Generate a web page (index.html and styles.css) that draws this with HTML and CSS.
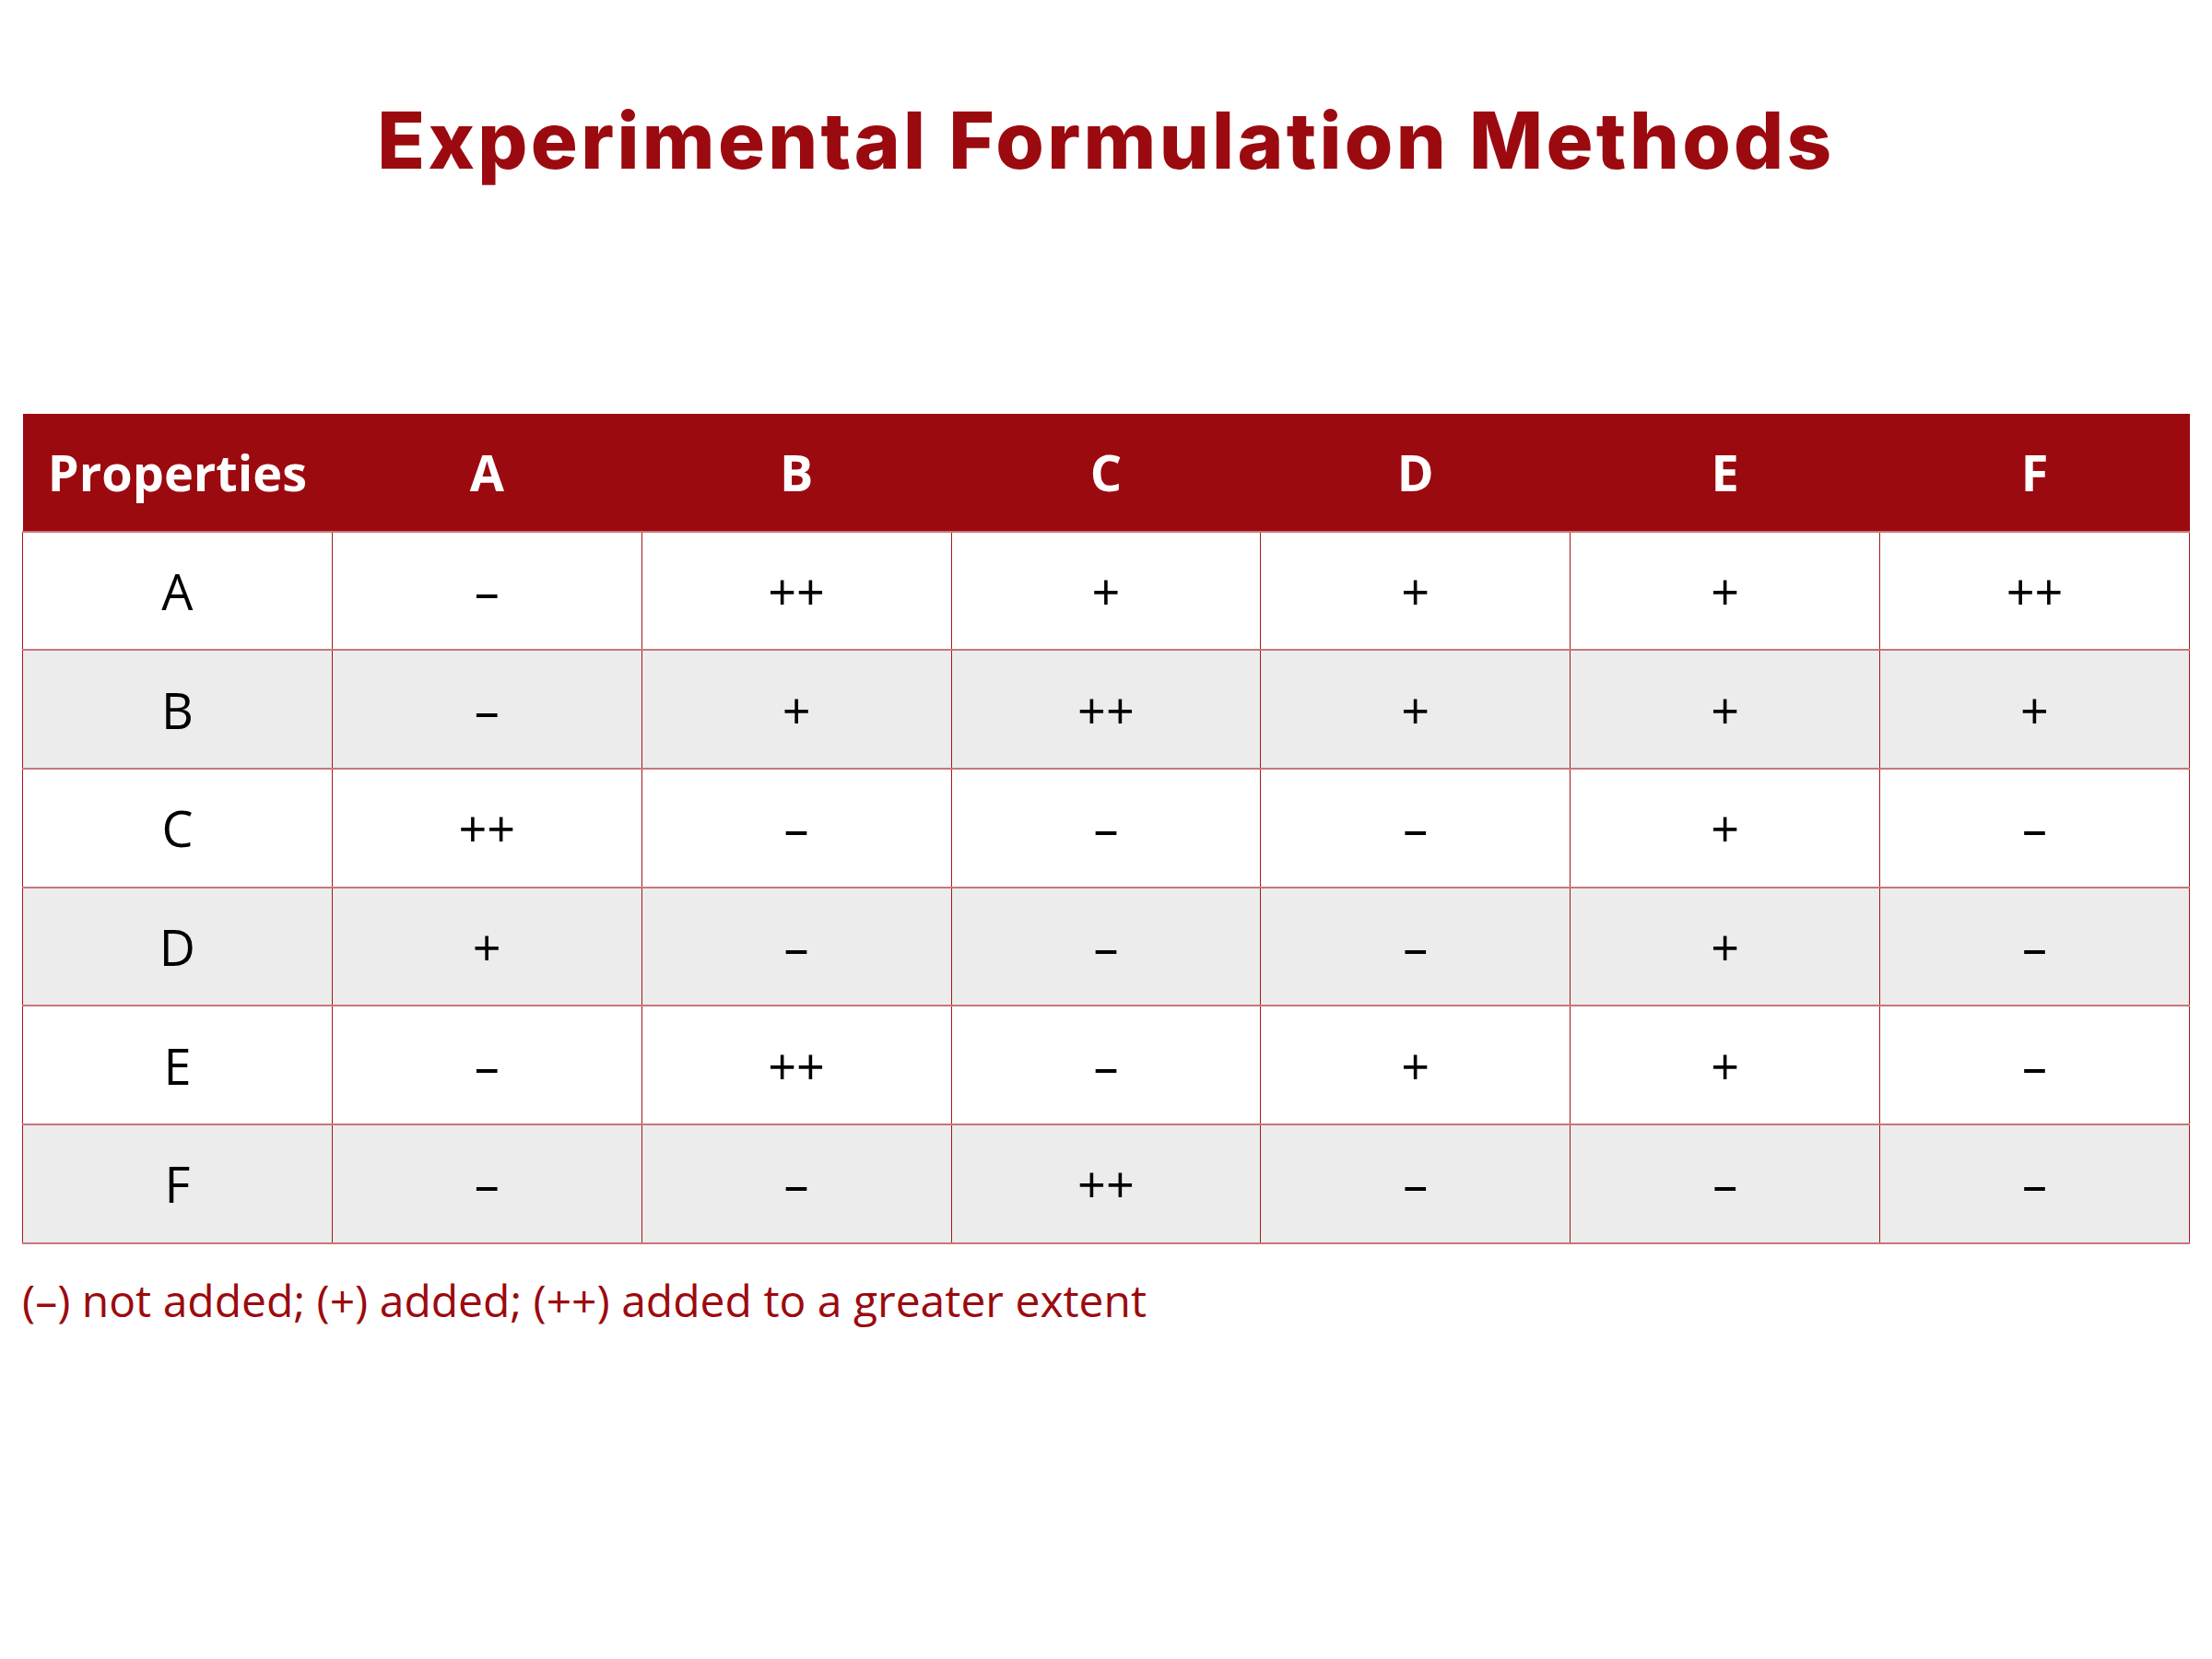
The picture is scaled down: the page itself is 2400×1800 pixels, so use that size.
FILE: index.html
```html
<!DOCTYPE html>
<html lang="en">
<head>
<meta charset="utf-8">
<title>Experimental Formulation Methods</title>
<link rel="stylesheet" href="styles.css">
</head>
<body>
<main class="page">
  <h1 class="title">Experimental Formulation Methods</h1>
  <table class="grid">
    <thead>
      <tr><th>Properties</th><th>A</th><th>B</th><th>C</th><th>D</th><th>E</th><th>F</th></tr>
    </thead>
    <tbody>
      <tr><td>A</td><td>–</td><td>++</td><td>+</td><td>+</td><td>+</td><td>++</td></tr>
      <tr><td>B</td><td>–</td><td>+</td><td>++</td><td>+</td><td>+</td><td>+</td></tr>
      <tr><td>C</td><td>++</td><td>–</td><td>–</td><td>–</td><td>+</td><td>–</td></tr>
      <tr><td>D</td><td>+</td><td>–</td><td>–</td><td>–</td><td>+</td><td>–</td></tr>
      <tr><td>E</td><td>–</td><td>++</td><td>–</td><td>+</td><td>+</td><td>–</td></tr>
      <tr><td>F</td><td>–</td><td>–</td><td>++</td><td>–</td><td>–</td><td>–</td></tr>
    </tbody>
  </table>
  <p class="note">(–) not added; (+) added; (++) added to a greater extent</p>
</main>
</body>
</html>
```
FILE: styles.css
```css
html, body {
  margin: 0;
  padding: 0;
  background: #ffffff;
}

.page {
  padding: 0 24px;
  font-family: "Open Sans", "Liberation Sans", sans-serif;
}

.title {
  margin: 101px 0 0;
  text-align: center;
  font-family: Inter, "Open Sans", sans-serif;
  font-weight: 800;
  font-size: 85px;
  line-height: normal;
  letter-spacing: 3.3px;
  color: #9b0a0f;
}

.grid {
  margin-top: 245px;
  width: 2352px;
  table-layout: fixed;
  border-collapse: collapse;
}

.grid th,
.grid td {
  height: 126.7px;
  padding: 0;
  text-align: center;
  vertical-align: middle;
  font-size: 54px;
}

.grid th {
  background: #9b0a0f;
  color: #ffffff;
  font-weight: 700;
}

.grid td {
  color: #000000;
  font-weight: 400;
  border-left: 1.5px solid #a8161d;
  border-right: 1.5px solid #a8161d;
}

.grid tr {
  border-bottom: 2px solid #c8767a;
}

.grid tbody tr:nth-child(even) td {
  background: #ececec;
}

.note {
  margin: 28px 0 0;
  font-size: 48px;
  line-height: normal;
  color: #9b0a0f;
}
```
